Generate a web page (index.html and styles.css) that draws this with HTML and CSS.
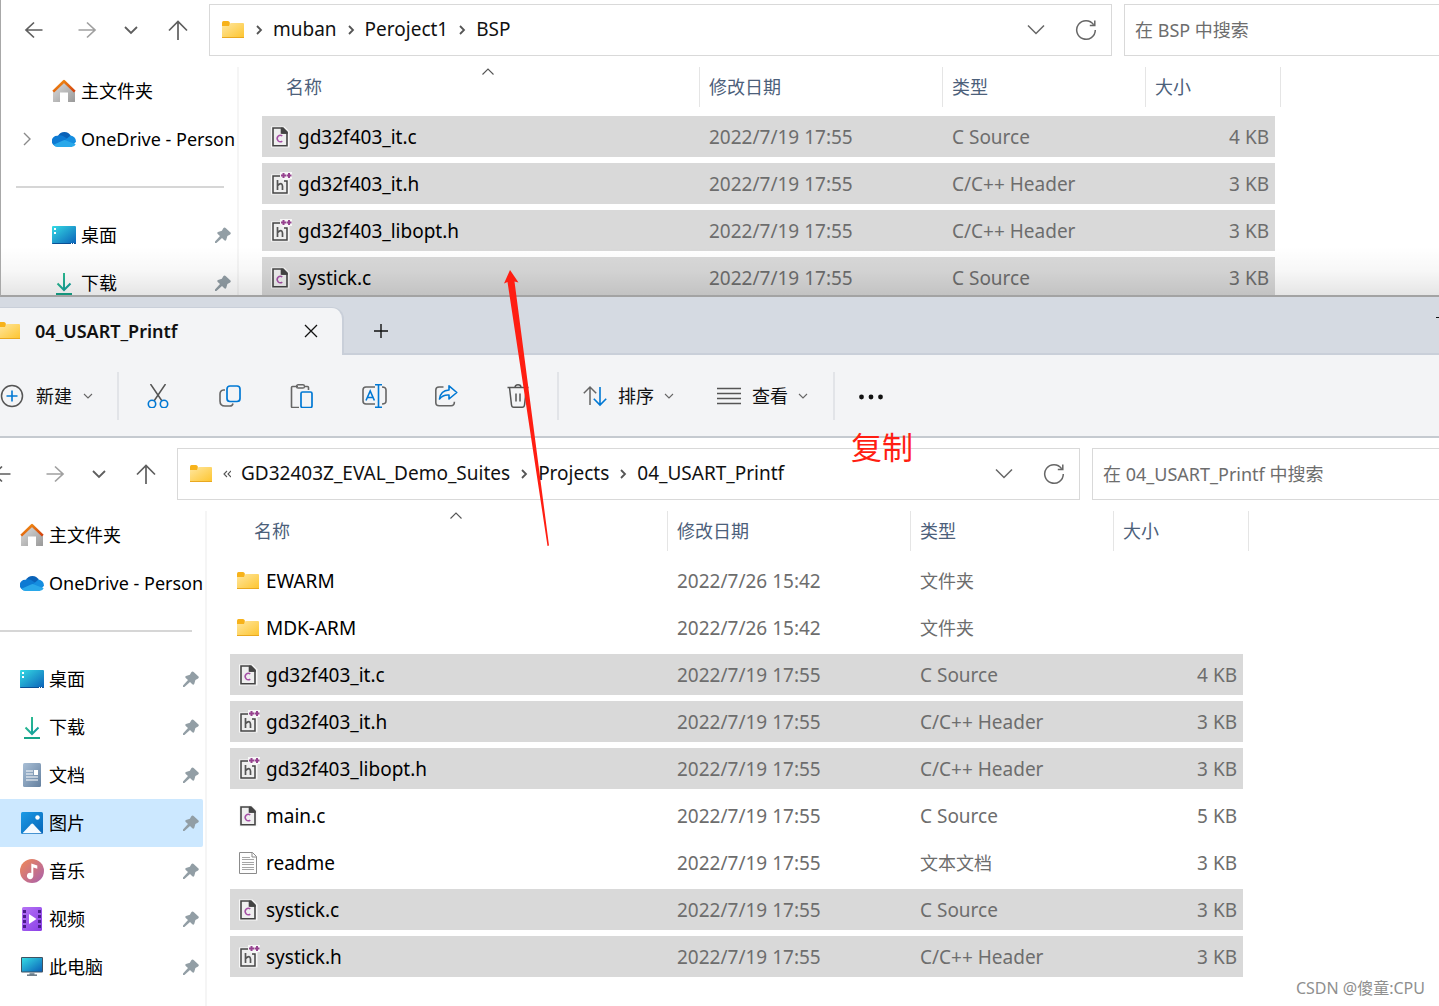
FILE: index.html
```html
<!DOCTYPE html>
<html lang="zh-CN">
<head>
<meta charset="utf-8">
<meta name="viewport" content="width=device-width, initial-scale=1">
<title>04_USART_Printf</title>
<link rel="stylesheet" href="styles.css">
</head>
<body>
<svg class="sprite" aria-hidden="true">
  <defs>
    <linearGradient id="gFolder" x1="0" y1="0" x2="1" y2="1"><stop offset="0" stop-color="#ffe7a0"/><stop offset="1" stop-color="#fdc530"/></linearGradient>
    <linearGradient id="gRoof" x1="0" y1="0" x2="1" y2="1"><stop offset="0" stop-color="#f59512"/><stop offset="1" stop-color="#d2400f"/></linearGradient>
    <linearGradient id="gWall" x1="0" y1="0" x2="1" y2="1"><stop offset="0" stop-color="#dedede"/><stop offset="1" stop-color="#999"/></linearGradient>
    <linearGradient id="gScreen" x1="0" y1="0" x2="1" y2="1"><stop offset="0" stop-color="#35dbe4"/><stop offset="1" stop-color="#0a60b8"/></linearGradient>
    <linearGradient id="gDown" x1="0" y1="0" x2="1" y2="1"><stop offset="0" stop-color="#35c48b"/><stop offset="1" stop-color="#0e9a9f"/></linearGradient>
    <linearGradient id="gDoc" x1="0" y1="0" x2="1" y2="1"><stop offset="0" stop-color="#a9bfd6"/><stop offset="1" stop-color="#64809f"/></linearGradient>
    <linearGradient id="gPic" x1="0" y1="0" x2="1" y2="1"><stop offset="0" stop-color="#1c9be6"/><stop offset="1" stop-color="#0765b8"/></linearGradient>
    <linearGradient id="gMusic" x1="0" y1="0" x2="1" y2="1"><stop offset="0" stop-color="#f28a55"/><stop offset="1" stop-color="#a85fae"/></linearGradient>
    <linearGradient id="gVideo" x1="0" y1="0" x2="1" y2="1"><stop offset="0" stop-color="#b573f5"/><stop offset="1" stop-color="#8a3fe6"/></linearGradient>
  </defs>
  <symbol id="back" viewBox="0 0 20 20"><path d="M18.500 10H2M10 2.500 2 10l8 7.500" fill="none" stroke="currentColor" stroke-width="1.700"/></symbol>
  <symbol id="forward" viewBox="0 0 20 20"><path d="M1.500 10H18M10 2.500 18 10l-8 7.500" fill="none" stroke="currentColor" stroke-width="1.700"/></symbol>
  <symbol id="recent" viewBox="0 0 20 20"><path d="M4 7l6 6 6-6" fill="none" stroke="currentColor" stroke-width="1.800"/></symbol>
  <symbol id="up" viewBox="0 0 20 20"><path d="M10 20V1.500M1 10.500l9-9 9 9" fill="none" stroke="currentColor" stroke-width="1.700"/></symbol>
  <symbol id="drop" viewBox="0 0 20 20"><path d="M2 5.500l8 8 8-8" fill="none" stroke="currentColor" stroke-width="1.500"/></symbol>
  <symbol id="refresh" viewBox="0 0 22 22"><path d="M18.600 5.600A9.300 9.300 0 1 0 20.300 11M19.800 1.500v5h-5" fill="none" stroke="currentColor" stroke-width="1.500"/></symbol>
  <symbol id="crumb" viewBox="0 0 8 12"><path d="M2 2l4 4-4 4" fill="none" stroke="currentColor" stroke-width="1.800"/></symbol>
  <symbol id="crumbs" viewBox="0 0 8 12"><path d="M4 3L1 6l3 3M8 3L5 6l3 3" fill="none" stroke="currentColor" stroke-width="1.100"/></symbol>
  <symbol id="expand" viewBox="0 0 10 14"><path d="M2 1l6 6-6 6" fill="none" stroke="currentColor" stroke-width="1.400"/></symbol>
  <symbol id="small-down" viewBox="0 0 12 12"><path d="M2 4l4 4 4-4" fill="none" stroke="currentColor" stroke-width="1.100"/></symbol>
  <symbol id="sorted" viewBox="0 0 12 7"><path d="M.500 6.500L6 1l5.500 5.500" fill="none" stroke="currentColor" stroke-width="1.100"/></symbol>
  <symbol id="folder" viewBox="0 0 24 24"><path d="M1 4.500q0-1.500 1.500-1.500h4.300q1 0 1.500.700l.500.800v4H1z" fill="#f7b21a"/><path d="M1 8h7l1.500-3H22q1 0 1 1v13.500H1z" fill="url(#gFolder)"/><path d="M1 19h22v1H1z" fill="#e9a820"/></symbol>
  <symbol id="home" viewBox="0 0 24 24"><path d="M1 12 12 2l11 10v10.500q0 .500-.500.500H16v-9.500H8V23H1.500q-.500 0-.500-.500z" fill="url(#gWall)"/><path d="M1.200 12.600 12 2.200l10.800 10.400" fill="none" stroke="url(#gRoof)" stroke-width="2.600" stroke-linejoin="round"/></symbol>
  <symbol id="cloud" viewBox="0 0 24 24"><path d="M6 9A7.200 7.200 0 0 1 18.800 8.800L14 15z" fill="#0a62b8"/><path d="M5 19.500A5.300 5.300 0 0 1 5.300 8.700Q8.500 7.400 11.500 9.300l7.500 5-3 4.500z" fill="#0d7ad3"/><path d="M12 14l6.500-5.400q5.300.900 5.500 6.200L21 18z" fill="#158ee0"/><path d="M1.500 17.800l9.500-4.400q1.500-.700 3 0l9.700 3.900A4.500 4.500 0 0 1 19.500 20H5.500q-2.500 0-4-2.200z" fill="#29a8ea"/></symbol>
  <symbol id="desktop" viewBox="0 0 24 24"><rect x="0" y="3" width="24" height="18" rx="1" fill="url(#gScreen)"/><path d="M0 20h24q0 1-1 1H1q-1 0-1-1z" fill="#0b4f94"/><path d="M2 5h2v2H2zM2 9h2v2H2zM19 20h1v1h-1zM21 20h1v1h-1z" fill="#fff"/></symbol>
  <symbol id="download" viewBox="0 0 24 24"><path d="M12 2v17M5.500 12.500 12 19l6.500-6.500" fill="none" stroke="url(#gDown)" stroke-width="2"/><path d="M4 22h16v2H4z" fill="#16a58a"/></symbol>
  <symbol id="document" viewBox="0 0 24 24"><rect x="3" width="18" height="24" rx="1.500" fill="url(#gDoc)"/><path d="M6 8h7M6 11h7M6 14h12M6 17h12" stroke="#fff" stroke-width="1.200"/><path d="M14 7h4v5h-4z" fill="#fff"/></symbol>
  <symbol id="picture" viewBox="0 0 24 24"><rect x="1" y="1" width="22" height="22" rx="1.500" fill="url(#gPic)"/><path d="M2.500 22.300 11 13.200q1.200-1.200 2.400 0l8.400 9.100z" fill="#f5faff"/><circle cx="17.500" cy="6.500" r="2.200" fill="#fff"/></symbol>
  <symbol id="music" viewBox="0 0 24 24"><circle cx="12" cy="12" r="12" fill="url(#gMusic)"/><path d="M11.300 4.500l6 2v3.300l-4-1.300v8.300a3.200 3.200 0 1 1-2-2.800z" fill="#fff"/></symbol>
  <symbol id="video" viewBox="0 0 24 24"><rect x="2" width="20" height="24" rx="1.500" fill="url(#gVideo)"/><path d="M3 3h3v3H3zm0 5h3v3H3zm0 5h3v3H3zm0 5h3v3H3zM18 3h3v3h-3zm0 5h3v3h-3zm0 5h3v3h-3zm0 5h3v3h-3z" fill="#4b1d8c"/><path d="M9 7l7.500 5L9 17z" fill="#fff"/></symbol>
  <symbol id="computer" viewBox="0 0 24 24"><rect x="1" y="2" width="22" height="15.500" rx="1" fill="#3f5262"/><path d="M2 3h20v13.500H2z" fill="url(#gScreen)"/><path d="M9.500 17.500h5v2.500h-5z" fill="#8799a5"/><path d="M7 19.500h10v1.300H7z" fill="#4e606e"/></symbol>
  <symbol id="pin" viewBox="0 0 16 16"><path d="M8.300 1.200q1.200-1.300 2.600 0l4.300 4q1.300 1.300-.100 2.200l-2.700 1.500-1.100 3.900q-.700 1.700-2 .500L7 11 1.400 16 0 16v-1.400L5 9 2.700 6.900q-1.100-1.300.300-2l3.900-1.200z" fill="#929ea5"/></symbol>
  <symbol id="file-c" viewBox="0 0 24 24"><path d="M3 1.500h13.500l5 5V22.500H3z" fill="#f7f7f7"/><path d="M5 3h8.500v5H19v12.800H5z" fill="#efefef" stroke="#444" stroke-width="1.600"/><path d="M13.500 2.200h1.800l4.500 4.500v2h-6.300z" fill="#444"/><path d="M14.300 10.900a3.200 3.200 0 1 0 0 5.200" fill="none" stroke="#a54fa5" stroke-width="1.500"/></symbol>
  <symbol id="file-h" viewBox="0 0 24 24"><path d="M3 2.500h9V0H24v7h-2.500v15.500H3z" fill="#f7f7f7"/><path d="M12 4H5v17h14V9h-3" fill="#efefef" stroke="#444" stroke-width="1.500"/><path d="M9.500 8v10M9.500 13.500q4.500-4 5 .500v4" fill="none" stroke="#555" stroke-width="1.700"/><path d="M13 3.500h5M15.500 1V6M18.500 3.500h5M21 1V6" stroke="#96428f" stroke-width="2"/></symbol>
  <symbol id="file-txt" viewBox="0 0 24 24"><path d="M3.500 1.500h13l4 4v17h-17z" fill="#fdfdfd" stroke="#8b8b8b"/><path d="M16 1.500V6h4.500" fill="none" stroke="#8b8b8b"/><path d="M6 6.500h8M6 8.500h12M6 11.500h12M6 13.500h12M6 16.500h12M6 18.500h12" stroke="#a5a5a5" stroke-width="1"/></symbol>
  <symbol id="close" viewBox="0 0 16 16"><path d="M2 2l12 12M14 2L2 14" stroke="currentColor" stroke-width="1.300"/></symbol>
  <symbol id="plus" viewBox="0 0 16 16"><path d="M8 1v14M1 8h14" stroke="currentColor" stroke-width="1.400"/></symbol>
  <symbol id="new" viewBox="0 0 24 24"><circle cx="12" cy="12" r="10.500" fill="none" stroke="#555" stroke-width="1.500"/><path d="M12 6.500v11M6.500 12h11" stroke="#0078d4" stroke-width="1.600"/></symbol>
  <symbol id="cut" viewBox="0 0 24 24"><path d="M4.500 0 16 17M19.500 0 8 17" stroke="#555" stroke-width="1.500"/><g fill="#f3f4f6" stroke="#0078d4" stroke-width="1.600"><circle cx="6" cy="20" r="3.700"/><circle cx="18" cy="20" r="3.700"/></g></symbol>
  <symbol id="copy" viewBox="0 0 24 24"><path d="M7 6H5.500Q2 6.500 2 10v7q0 5 5 5h5q2.500 0 3-2.500" fill="none" stroke="#666" stroke-width="1.600"/><rect x="9" y="2" width="13" height="15.500" rx="3" fill="none" stroke="#0078d4" stroke-width="1.700"/></symbol>
  <symbol id="paste" viewBox="0 0 24 24"><path d="M8 2.500H2.500q-1 0-1 1v19q0 1 1 1H9M15 2.500h2.500q1 0 1 1V6" fill="none" stroke="#666" stroke-width="1.600"/><rect x="6.500" y=".800" width="8" height="3.200" rx="1.600" fill="none" stroke="#666" stroke-width="1.400"/><rect x="11" y="8" width="11" height="15.500" rx="1.500" fill="none" stroke="#0078d4" stroke-width="1.700"/></symbol>
  <symbol id="rename" viewBox="0 0 26 24"><path d="M14 3H5Q2 3 2 6v11q0 3 3 3h9M21 3q4 0 4 3v11q0 3-4 3" fill="none" stroke="#666" stroke-width="1.600"/><path d="M17.500 1v22M14 .800h7M14 23.200h7M5 16.500 9.200 7l4.200 9.500M6.500 13.500H12" fill="none" stroke="#0078d4" stroke-width="1.600"/></symbol>
  <symbol id="share" viewBox="0 0 24 24"><path d="M9.500 3H5Q1.800 3 1.800 6v12.500q0 3.300 3.300 3.300h12q3.300 0 3.300-4" fill="none" stroke="#666" stroke-width="1.600"/><path d="M15 1.800 22.800 8.500 15 15v-4q-6-.500-9.500 4Q6.500 6.500 15 6z" fill="none" stroke="#0078d4" stroke-width="1.600" stroke-linejoin="round"/></symbol>
  <symbol id="trash" viewBox="0 0 24 24"><path d="M1.500 3.500h21M9 3.500Q9 .800 12 .800t3 2.700M3.500 3.500l2 17.500q.300 2.200 2.200 2.200h8.600q1.900 0 2.200-2.200l2-17.500M10 9.500v8M14 9.500v8" fill="none" stroke="#555" stroke-width="1.500"/></symbol>
  <symbol id="sort" viewBox="0 0 24 24"><path d="M7 21V3M.800 9.200 7 3l6.200 6.200" fill="none" stroke="#666" stroke-width="1.500"/><path d="M17 3v18M10.800 14.800 17 21l6.200-6.200" fill="none" stroke="#0078d4" stroke-width="1.600"/></symbol>
  <symbol id="view" viewBox="0 0 24 24"><path d="M0 4.500h24M0 9.500h24M0 14.500h24M0 19.500h24" stroke="#555" stroke-width="1.500"/></symbol>
  <symbol id="more" viewBox="0 0 24 24"><g fill="#111"><circle cx="2.500" cy="13" r="2.400"/><circle cx="12" cy="13" r="2.400"/><circle cx="21.500" cy="13" r="2.400"/></g></symbol>
</svg>

<section class="window window-back" aria-label="BSP">
  <div class="nav">
    <div class="history">
      <button aria-label="后退"><svg><use href="#back"/></svg></button>
      <button aria-label="前进" class="dim"><svg><use href="#forward"/></svg></button>
      <button aria-label="最近" class="narrow"><svg><use href="#recent"/></svg></button>
      <button aria-label="向上" class="narrow"><svg><use href="#up"/></svg></button>
    </div>
    <div class="address">
      <svg class="icon"><use href="#folder"/></svg>
      <svg class="crumb"><use href="#crumb"/></svg><a href="#">muban</a>
      <svg class="crumb"><use href="#crumb"/></svg><a href="#">Peroject1</a>
      <svg class="crumb"><use href="#crumb"/></svg><a href="#">BSP</a>
      <button class="address-drop" aria-label="以前的位置"><svg><use href="#drop"/></svg></button>
      <button class="address-refresh" aria-label="刷新"><svg><use href="#refresh"/></svg></button>
    </div>
    <input class="search" type="search" placeholder="在 BSP 中搜索" aria-label="在 BSP 中搜索">
  </div>
  <div class="content">
    <nav class="sidebar">
      <a class="place" href="#"><svg class="icon"><use href="#home"/></svg><span>主文件夹</span></a>
      <a class="place latin" href="#"><svg class="expand"><use href="#expand"/></svg><svg class="icon"><use href="#cloud"/></svg><span>OneDrive - Person</span></a>
      <hr>
      <a class="place" href="#"><svg class="icon"><use href="#desktop"/></svg><span>桌面</span><svg class="pin"><use href="#pin"/></svg></a>
      <a class="place" href="#"><svg class="icon"><use href="#download"/></svg><span>下载</span><svg class="pin"><use href="#pin"/></svg></a>
    </nav>
    <table class="files">
      <colgroup><col class="col-name"><col class="col-date"><col class="col-type"><col class="col-size"><col class="col-edge"></colgroup>
      <thead><tr>
        <th><button>名称<svg class="sorted"><use href="#sorted"/></svg></button></th><th><button>修改日期</button></th><th><button>类型</button></th><th><button>大小</button></th><td class="edge"><div></div></td>
      </tr></thead>
      <tbody>
        <tr class="selected"><td><div class="name"><svg class="icon"><use href="#file-c"/></svg>gd32f403_it.c</div></td><td>2022/7/19 17:55</td><td>C Source</td><td>4 KB</td></tr>
        <tr class="selected"><td><div class="name"><svg class="icon"><use href="#file-h"/></svg>gd32f403_it.h</div></td><td>2022/7/19 17:55</td><td>C/C++ Header</td><td>3 KB</td></tr>
        <tr class="selected"><td><div class="name"><svg class="icon"><use href="#file-h"/></svg>gd32f403_libopt.h</div></td><td>2022/7/19 17:55</td><td>C/C++ Header</td><td>3 KB</td></tr>
        <tr class="selected"><td><div class="name"><svg class="icon"><use href="#file-c"/></svg>systick.c</div></td><td>2022/7/19 17:55</td><td>C Source</td><td>3 KB</td></tr>
      </tbody>
    </table>
  </div>
</section>

<section class="window window-front" aria-label="04_USART_Printf">
  <div class="tabs">
    <div class="tab">
      <svg class="icon"><use href="#folder"/></svg><span>04_USART_Printf</span>
      <button aria-label="关闭标签页"><svg><use href="#close"/></svg></button>
    </div>
    <button class="add-tab" aria-label="新标签页"><svg><use href="#plus"/></svg></button>
    <button class="minimize" aria-label="最小化"></button>
  </div>
  <div class="toolbar">
    <button class="new"><svg class="icon"><use href="#new"/></svg>新建<svg class="small"><use href="#small-down"/></svg></button>
    <i class="separator"></i>
    <button class="tool" aria-label="剪切"><svg class="icon"><use href="#cut"/></svg></button>
    <button class="tool" aria-label="复制"><svg class="icon"><use href="#copy"/></svg></button>
    <button class="tool" aria-label="粘贴"><svg class="icon"><use href="#paste"/></svg></button>
    <button class="tool" aria-label="重命名"><svg class="icon wide"><use href="#rename"/></svg></button>
    <button class="tool" aria-label="共享"><svg class="icon"><use href="#share"/></svg></button>
    <button class="tool" aria-label="删除"><svg class="icon"><use href="#trash"/></svg></button>
    <i class="separator"></i>
    <button class="menu"><svg class="icon"><use href="#sort"/></svg>排序<svg class="small"><use href="#small-down"/></svg></button>
    <button class="menu"><svg class="icon"><use href="#view"/></svg>查看<svg class="small"><use href="#small-down"/></svg></button>
    <i class="separator"></i>
    <button class="menu" aria-label="查看更多"><svg class="icon"><use href="#more"/></svg></button>
  </div>
  <div class="nav">
    <div class="history">
      <button aria-label="后退"><svg><use href="#back"/></svg></button>
      <button aria-label="前进" class="dim"><svg><use href="#forward"/></svg></button>
      <button aria-label="最近" class="narrow"><svg><use href="#recent"/></svg></button>
      <button aria-label="向上" class="narrow"><svg><use href="#up"/></svg></button>
    </div>
    <div class="address">
      <svg class="icon"><use href="#folder"/></svg>
      <svg class="crumb"><use href="#crumbs"/></svg><a href="#">GD32403Z_EVAL_Demo_Suites</a>
      <svg class="crumb"><use href="#crumb"/></svg><a href="#">Projects</a>
      <svg class="crumb"><use href="#crumb"/></svg><a href="#">04_USART_Printf</a>
      <button class="address-drop" aria-label="以前的位置"><svg><use href="#drop"/></svg></button>
      <button class="address-refresh" aria-label="刷新"><svg><use href="#refresh"/></svg></button>
    </div>
    <input class="search" type="search" placeholder="在 04_USART_Printf 中搜索" aria-label="在 04_USART_Printf 中搜索">
  </div>
  <div class="content">
    <nav class="sidebar">
      <a class="place" href="#"><svg class="icon"><use href="#home"/></svg><span>主文件夹</span></a>
      <a class="place latin" href="#"><svg class="expand"><use href="#expand"/></svg><svg class="icon"><use href="#cloud"/></svg><span>OneDrive - Person</span></a>
      <hr>
      <a class="place" href="#"><svg class="icon"><use href="#desktop"/></svg><span>桌面</span><svg class="pin"><use href="#pin"/></svg></a>
      <a class="place" href="#"><svg class="icon"><use href="#download"/></svg><span>下载</span><svg class="pin"><use href="#pin"/></svg></a>
      <a class="place" href="#"><svg class="icon"><use href="#document"/></svg><span>文档</span><svg class="pin"><use href="#pin"/></svg></a>
      <a class="place current" href="#"><svg class="icon"><use href="#picture"/></svg><span>图片</span><svg class="pin"><use href="#pin"/></svg></a>
      <a class="place" href="#"><svg class="icon"><use href="#music"/></svg><span>音乐</span><svg class="pin"><use href="#pin"/></svg></a>
      <a class="place" href="#"><svg class="icon"><use href="#video"/></svg><span>视频</span><svg class="pin"><use href="#pin"/></svg></a>
      <a class="place" href="#"><svg class="icon"><use href="#computer"/></svg><span>此电脑</span><svg class="pin"><use href="#pin"/></svg></a>
    </nav>
    <table class="files">
      <colgroup><col class="col-name"><col class="col-date"><col class="col-type"><col class="col-size"><col class="col-edge"></colgroup>
      <thead><tr>
        <th><button>名称<svg class="sorted"><use href="#sorted"/></svg></button></th><th><button>修改日期</button></th><th><button>类型</button></th><th><button>大小</button></th><td class="edge"><div></div></td>
      </tr></thead>
      <tbody>
        <tr><td><div class="name"><svg class="icon"><use href="#folder"/></svg>EWARM</div></td><td>2022/7/26 15:42</td><td class="cjk">文件夹</td><td></td></tr>
        <tr><td><div class="name"><svg class="icon"><use href="#folder"/></svg>MDK-ARM</div></td><td>2022/7/26 15:42</td><td class="cjk">文件夹</td><td></td></tr>
        <tr class="selected"><td><div class="name"><svg class="icon"><use href="#file-c"/></svg>gd32f403_it.c</div></td><td>2022/7/19 17:55</td><td>C Source</td><td>4 KB</td></tr>
        <tr class="selected"><td><div class="name"><svg class="icon"><use href="#file-h"/></svg>gd32f403_it.h</div></td><td>2022/7/19 17:55</td><td>C/C++ Header</td><td>3 KB</td></tr>
        <tr class="selected"><td><div class="name"><svg class="icon"><use href="#file-h"/></svg>gd32f403_libopt.h</div></td><td>2022/7/19 17:55</td><td>C/C++ Header</td><td>3 KB</td></tr>
        <tr><td><div class="name"><svg class="icon"><use href="#file-c"/></svg>main.c</div></td><td>2022/7/19 17:55</td><td>C Source</td><td>5 KB</td></tr>
        <tr><td><div class="name"><svg class="icon"><use href="#file-txt"/></svg>readme</div></td><td>2022/7/19 17:55</td><td class="cjk">文本文档</td><td>3 KB</td></tr>
        <tr class="selected"><td><div class="name"><svg class="icon"><use href="#file-c"/></svg>systick.c</div></td><td>2022/7/19 17:55</td><td>C Source</td><td>3 KB</td></tr>
        <tr class="selected"><td><div class="name"><svg class="icon"><use href="#file-h"/></svg>systick.h</div></td><td>2022/7/19 17:55</td><td>C/C++ Header</td><td>3 KB</td></tr>
      </tbody>
    </table>
  </div>
</section>

<svg class="arrow" viewBox="0 0 50 278" aria-hidden="true"><path d="M10 0 18.500 12.500 14.500 11.500 49 275.500 47.500 276 7.500 12 4 13.500z" fill="#ff1e12"/></svg>
<strong class="note">复制</strong>
<small class="watermark">CSDN @傻童:CPU</small>
</body>
</html>
```
FILE: styles.css
```css
* { box-sizing: border-box; }

body {
  position: relative;
  display: flex;
  flex-direction: column;
  min-height: 100vh;
  margin: 0;
  overflow-x: hidden;
  background: #fff;
  color: #111;
  font: 18px/24px "Noto Sans", "Noto Sans CJK SC", sans-serif;
}

button {
  display: flex;
  align-items: center;
  justify-content: center;
  padding: 0;
  border: 0;
  background: none;
  color: inherit;
  font: inherit;
}

a { color: inherit; text-decoration: none; }
svg { display: block; flex: none; }
.sprite { position: absolute; width: 0; height: 0; }
.icon { width: 24px; height: 24px; }
.icon.wide { width: 26px; }

/* windows */
.window { background: #fff; }

.window-back {
  position: relative;
  height: 297px;
  overflow: hidden;
  border-left: 1px solid #a8a8a8;
  border-bottom: 2px solid #a3a3a3;
}

/* shadow cast by the front window */
.window-back::after {
  content: "";
  position: absolute;
  inset: auto 0 0;
  height: 48px;
  background: linear-gradient(rgba(0, 0, 0, 0), rgba(0, 0, 0, .03) 50%, rgba(0, 0, 0, .1));
}

.window-back .nav, .window-back .content { margin-left: -1px; }

.window-front {
  display: flex;
  flex: 1;
  flex-direction: column;
  margin-left: -32px;
}

/* tabs */
.tabs {
  display: flex;
  align-items: flex-end;
  height: 58px;
  border-bottom: 2px solid #c9cfd9;
  background: #d5dae2;
}

.tab {
  display: flex;
  align-items: center;
  width: 376px;
  height: 48px;
  margin-bottom: -2px;
  padding: 0 23px 2px 29px;
  border: solid #c9cfd9;
  border-width: 1px 2px 0 0;
  border-radius: 0 12px 0 0;
  background: #f3f4f6;
  font-weight: 600;
}

.tab span { flex: 1; margin-left: 14px; }
.tab button, .tab svg:not(.icon), .add-tab svg { width: 16px; height: 16px; }
.add-tab { width: 74px; height: 44px; }

.minimize {
  align-self: flex-start;
  width: 3px;
  height: 1px;
  margin: 20px 0 0 auto;
  background: #111;
}

/* toolbar */
.toolbar {
  display: flex;
  align-items: center;
  height: 83px;
  padding-left: 32px;
  border-bottom: 2px solid #c5cad0;
  background: #f3f4f6;
}

.toolbar button { height: 48px; }
.menu { gap: 11px; padding: 0 21px; }
.new { gap: 12px; padding-right: 20px; }
.small { width: 12px; height: 12px; margin-left: -2px; color: #666; }
.tool { width: 72px; }
.separator { width: 2px; height: 48px; margin: 0 3px; background: #e2e4e8; }

/* navigation row */
.nav {
  display: flex;
  height: 67px;
  padding: 4px 0 11px;
}

.window-front .nav { height: 73px; padding-top: 10px; }

.history {
  display: flex;
  align-items: center;
  width: 209px;
  padding-left: 7px;
  color: #5e5e5e;
}

.history button { width: 53px; height: 40px; }
.history .narrow { width: 46px; }
.history .narrow:nth-child(3) { width: 36px; }
.history .narrow:last-child { width: 58px; }
.history svg { width: 20px; height: 20px; }
.history .dim { color: #a0a0a0; }

.address {
  display: flex;
  flex: 1;
  align-items: center;
  gap: 10px;
  min-width: 0;
  padding-left: 11px;
  border: 1px solid #d9d9d9;
  white-space: nowrap;
}

.address a { margin-top: -3px; font-size: 19px; }
.crumb { width: 8px; height: 12px; color: #555; }
.address button { height: 40px; color: #666; }
.address-drop { width: 30px; margin-left: auto; }
.address-drop svg { width: 20px; height: 20px; }
.address-refresh { width: 50px; }
.address-refresh svg { width: 22px; height: 22px; }

.search {
  flex: none;
  width: 315px;
  margin: 0 0 0 12px;
  padding: 0 10px;
  border: 1px solid #d9d9d9;
  border-right: 0;
  border-radius: 0;
  background: #fff;
  color: #111;
  font: inherit;
}

.window-front .search { width: 347px; }
.search::placeholder { color: #6d6d6d; opacity: 1; }

/* sidebar */
.content { display: flex; flex: 1; }

.sidebar {
  flex: none;
  width: 239px;
  padding-right: 2px;
  border-right: 2px solid #f5f5f5;
}

.place {
  position: relative;
  display: flex;
  align-items: center;
  gap: 5px;
  height: 48px;
  padding: 0 4px 0 52px;
  color: #000;
  white-space: nowrap;
}

.place span { flex: 1; }
.place.latin { padding-right: 0; }
.place.current { border-radius: 2px; background: #cce8ff; }
.pin { width: 16px; height: 16px; }

.expand {
  position: absolute;
  left: 22px;
  width: 10px;
  height: 14px;
  color: #8a8a8a;
}

.sidebar hr {
  height: 2px;
  margin: 23px 11px 23px 16px;
  border: 0;
  background: #d6d6d6;
}

/* file list */
.files {
  flex: none;
  align-self: flex-start;
  width: 1019px;
  margin-left: 23px;
  border-collapse: separate;
  border-spacing: 0;
  table-layout: fixed;
  color: #6d6d6d;
  font-size: 19px;
}

.col-name { width: 437px; }
.col-date { width: 243px; }
.col-type { width: 203px; }
.col-size { width: 130px; }
.col-edge { width: 6px; }

.files thead th, .files .edge {
  height: 49px;
  padding: 0;
  vertical-align: top;
  font-weight: 400;
}

.files th button, .edge div {
  position: relative;
  justify-content: flex-start;
  width: 100%;
  height: 40px;
  padding-left: 9px;
  border-left: 1px solid #e5e5e5;
  color: #4c607a;
  font-size: 18px;
}

.files th:first-child button { padding-left: 24px; border-left: 0; }
.files .edge div { padding: 0; border-right: 1px solid #e5e5e5; border-left: 0; }

.sorted {
  position: absolute;
  top: 1px;
  left: 220px;
  width: 12px;
  height: 7px;
  color: #555;
}

.files tbody td {
  height: 47px;
  padding: 0 0 0 10px;
  border-bottom: 6px solid transparent;
  background-clip: padding-box;
}

.files tbody td:first-child { padding-left: 6px; color: #000; }
.files tbody td:nth-child(4) { padding-right: 6px; text-align: right; }
.files tbody .cjk { font-size: 18px; }
.files .selected td { background-color: #d9d9d9; }
.name { display: flex; align-items: center; gap: 6px; }

/* annotations over the windows */
.arrow {
  position: absolute;
  top: 270px;
  left: 500px;
  width: 50px;
  height: 278px;
}

.note {
  position: absolute;
  top: 427px;
  left: 851px;
  color: #ff1e12;
  font-size: 31px;
  font-weight: 400;
  line-height: 40px;
}

.watermark {
  position: absolute;
  right: 14px;
  bottom: 6px;
  color: #8f8f8f;
  font-size: 16px;
}
```
